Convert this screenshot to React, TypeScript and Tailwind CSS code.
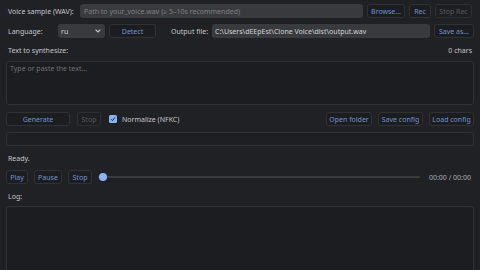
import React from "react";

const btn =
  "h-[14px] rounded-[3px] border border-[#2f3135] bg-[#1c1d21] text-[#7394cc] text-[7px] leading-none flex items-center justify-center";
const btnDis =
  "h-[14px] rounded-[3px] border border-[#2c2e32] bg-[#1e1f23] text-[#55585e] text-[7px] leading-none flex items-center justify-center";
const label = "text-[7px] text-[#c4c6ca] leading-none";

export default function App() {
  return (
    <div
      className="w-[480px] h-[270px] bg-[#202124] overflow-hidden flex flex-col px-[6px] pt-[4px]"
      style={{ fontFamily: '"Noto Sans", "Open Sans", sans-serif' }}
    >
      {/* Row 1 */}
      <div className="flex items-center h-[14px]">
        <div className={`${label} w-[74px] pl-[2px]`}>Voice sample (WAV):</div>
        <div className="h-[14px] w-[283px] rounded-[3px] bg-[#393a3d] flex items-center pl-[4px] text-[7px] text-[#7d8085] leading-none">
          Path to your_voice.wav (≥ 5–10s recommended)
        </div>
        <div className={`${btn} w-[38px] ml-[4px]`}>Browse...</div>
        <div className={`${btn} w-[22px] ml-[4px]`}>Rec</div>
        <div className={`${btnDis} w-[37px] ml-[4px]`}>Stop Rec</div>
      </div>

      {/* Row 2 */}
      <div className="flex items-center h-[14px] mt-[6px]">
        <div className={`${label} w-[52px] pl-[2px]`}>Language:</div>
        <div className="h-[14px] w-[47px] rounded-[3px] bg-[#393a3d] flex items-center justify-between pl-[3px] pr-[4px] text-[7px] text-[#d0d2d6] leading-none">
          <span>ru</span>
          <svg width="6" height="4" viewBox="0 0 6 4">
            <path d="M0.6 0.6 L3 3 L5.4 0.6" stroke="#c8cacf" strokeWidth="1.1" fill="none" />
          </svg>
        </div>
        <div className={`${btn} w-[47px] ml-[4px]`}>Detect</div>
        <div className={`${label} w-[41px] ml-[15px]`}>Output file:</div>
        <div className="h-[14px] flex-1 rounded-[3px] bg-[#393a3d] flex items-center pl-[3px] text-[7px] text-[#d0d2d6] leading-none">
          C:\Users\dEEpEst\Clone Voice\dist\output.wav
        </div>
        <div className={`${btn} w-[40px] ml-[4px]`}>Save as...</div>
      </div>

      {/* Text label row */}
      <div className="flex items-center justify-between h-[10px] mt-[7px] pl-[2px] pr-[2px]">
        <div className={label}>Text to synthesize:</div>
        <div className={label}>0 chars</div>
      </div>

      {/* Textarea */}
      <div className="h-[44px] mt-[6px] rounded-[3px] border border-[#303236] bg-[#1c1d20] px-[3px] pt-[3px] text-[7px] text-[#6f7277] leading-none">
        Type or paste the text...
      </div>

      {/* Actions row */}
      <div className="flex items-center h-[14px] mt-[7px]">
        <div className={`${btn} w-[64px]`}>Generate</div>
        <div className={`${btnDis} w-[24px] ml-[7px]`}>Stop</div>
        <div className="ml-[8px] w-[8px] h-[8px] rounded-[1.5px] bg-[#8ab4f8] flex items-center justify-center">
          <svg width="6" height="6" viewBox="0 0 6 6">
            <path d="M1 3.2 L2.4 4.6 L5 1.4" stroke="#202124" strokeWidth="1" fill="none" />
          </svg>
        </div>
        <div className={`${label} ml-[5px]`}>Normalize (NFKC)</div>
        <div className="flex-1" />
        <div className={`${btn} w-[46px]`}>Open folder</div>
        <div className={`${btn} w-[45px] ml-[6px]`}>Save config</div>
        <div className={`${btn} w-[45px] ml-[6px]`}>Load config</div>
      </div>

      {/* Progress box */}
      <div className="h-[14px] mt-[6px] rounded-[3px] border border-[#303236] bg-[#1e1f22]" />

      {/* Status */}
      <div className={`${label} mt-[9px] pl-[2px] h-[8px]`}>Ready.</div>

      {/* Player */}
      <div className="flex items-center h-[14px] mt-[7px]">
        <div className={`${btn} w-[22px]`}>Play</div>
        <div className={`${btn} w-[28px] ml-[6px]`}>Pause</div>
        <div className={`${btn} w-[24px] ml-[6px]`}>Stop</div>
        <div className="relative flex-1 ml-[6px] mr-[9px] h-[14px] flex items-center">
          <div className="w-full h-[2px] rounded bg-[#3a3c40]" />
          <div className="absolute left-[1px] top-[3px] w-[8px] h-[8px] rounded-full bg-[#8ab4f8]" />
        </div>
        <div className="text-[7px] text-[#a9acb1] leading-none pr-[3px]">00:00 / 00:00</div>
      </div>

      {/* Log label */}
      <div className={`${label} mt-[9px] pl-[2px] h-[8px]`}>Log:</div>

      {/* Log box */}
      <div className="flex-1 mt-[5px] rounded-t-[3px] border border-b-0 border-[#303236] bg-[#1c1d20]" />
    </div>
  );
}
